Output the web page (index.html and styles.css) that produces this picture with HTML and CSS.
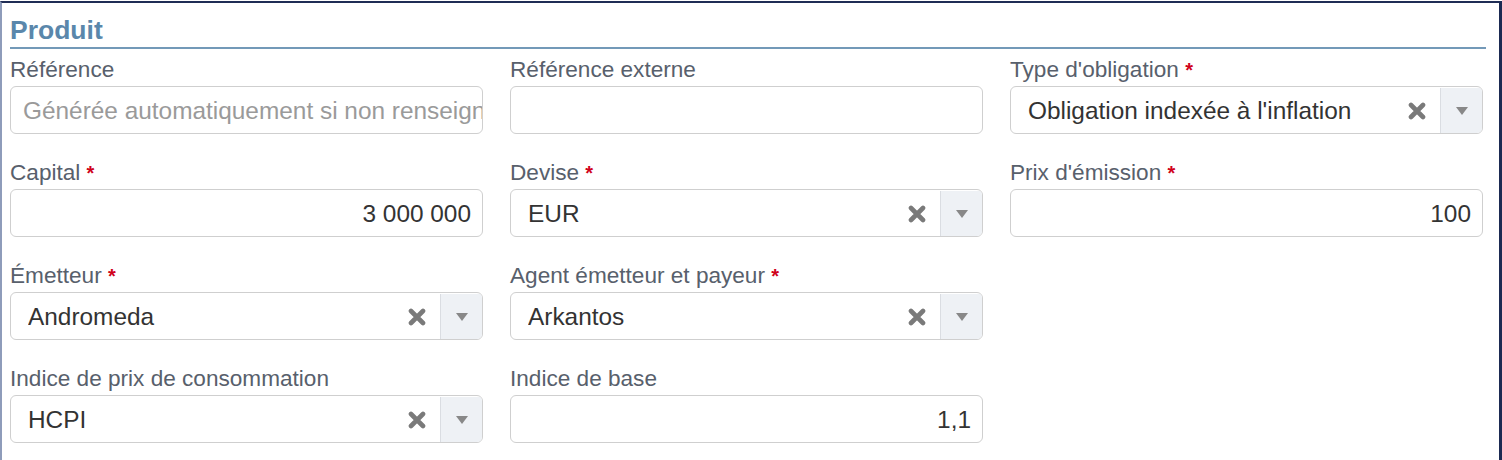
FILE: index.html
```html
<!DOCTYPE html>
<html lang="fr">
<head>
<meta charset="utf-8">
<link rel="stylesheet" href="styles.css">
</head>
<body>
<div class="frame">
  <h2 class="section-title">Produit</h2>
  <div class="grid">
    <div class="field">
      <label class="label">Référence</label>
      <div class="input placeholder">Générée automatiquement si non renseigné</div>
    </div>
    <div class="field">
      <label class="label">Référence externe</label>
      <div class="input"></div>
    </div>
    <div class="field">
      <label class="label">Type d'obligation <span class="req">*</span></label>
      <div class="select">
        <span class="value">Obligation indexée à l'inflation</span>
        <span class="clear"><svg width="18" height="18" viewBox="0 0 18 18"><path d="M3 3L15 15M15 3L3 15" stroke="#7a7a7a" stroke-width="4.6" stroke-linecap="round"/></svg></span>
        <span class="arrow"><svg width="12" height="8" viewBox="0 0 12 8"><path d="M0 0H12L6 8Z" fill="#888"/></svg></span>
      </div>
    </div>

    <div class="field">
      <label class="label">Capital <span class="req">*</span></label>
      <div class="input num">3 000 000</div>
    </div>
    <div class="field">
      <label class="label">Devise <span class="req">*</span></label>
      <div class="select">
        <span class="value">EUR</span>
        <span class="clear"><svg width="18" height="18" viewBox="0 0 18 18"><path d="M3 3L15 15M15 3L3 15" stroke="#7a7a7a" stroke-width="4.6" stroke-linecap="round"/></svg></span>
        <span class="arrow"><svg width="12" height="8" viewBox="0 0 12 8"><path d="M0 0H12L6 8Z" fill="#888"/></svg></span>
      </div>
    </div>
    <div class="field">
      <label class="label">Prix d'émission <span class="req">*</span></label>
      <div class="input num">100</div>
    </div>

    <div class="field">
      <label class="label">Émetteur <span class="req">*</span></label>
      <div class="select">
        <span class="value">Andromeda</span>
        <span class="clear"><svg width="18" height="18" viewBox="0 0 18 18"><path d="M3 3L15 15M15 3L3 15" stroke="#7a7a7a" stroke-width="4.6" stroke-linecap="round"/></svg></span>
        <span class="arrow"><svg width="12" height="8" viewBox="0 0 12 8"><path d="M0 0H12L6 8Z" fill="#888"/></svg></span>
      </div>
    </div>
    <div class="field">
      <label class="label">Agent émetteur et payeur <span class="req">*</span></label>
      <div class="select">
        <span class="value">Arkantos</span>
        <span class="clear"><svg width="18" height="18" viewBox="0 0 18 18"><path d="M3 3L15 15M15 3L3 15" stroke="#7a7a7a" stroke-width="4.6" stroke-linecap="round"/></svg></span>
        <span class="arrow"><svg width="12" height="8" viewBox="0 0 12 8"><path d="M0 0H12L6 8Z" fill="#888"/></svg></span>
      </div>
    </div>
    <div class="field empty"></div>

    <div class="field">
      <label class="label">Indice de prix de consommation</label>
      <div class="select">
        <span class="value">HCPI</span>
        <span class="clear"><svg width="18" height="18" viewBox="0 0 18 18"><path d="M3 3L15 15M15 3L3 15" stroke="#7a7a7a" stroke-width="4.6" stroke-linecap="round"/></svg></span>
        <span class="arrow"><svg width="12" height="8" viewBox="0 0 12 8"><path d="M0 0H12L6 8Z" fill="#888"/></svg></span>
      </div>
    </div>
    <div class="field">
      <label class="label">Indice de base</label>
      <div class="input num">1,1</div>
    </div>
    <div class="field empty"></div>
  </div>
</div>
</body>
</html>
```

FILE: styles.css
```css
* { box-sizing: border-box; }
html, body {
  margin: 0;
  padding: 0;
  background: #fff;
  font-family: "Liberation Sans", Arial, Helvetica, sans-serif;
}
.frame {
  width: 1502px;
  height: 460px;
  margin-top: 1px;
  border-top: 2px solid #1f2d55;
  border-left: 2px solid #8e9cba;
  border-right: 3px solid #1b2a52;
  padding: 0 13px 0 8px;
  overflow: hidden;
}
.section-title {
  margin: 0;
  padding-top: 12px;
  font-size: 26.5px;
  line-height: 30px;
  font-weight: bold;
  color: #5a87ab;
  border-bottom: 2px solid #7399b8;
  padding-bottom: 2px;
}
.grid {
  display: grid;
  grid-template-columns: 473px 473px 473px;
  column-gap: 27px;
  row-gap: 25px;
  margin-top: 7px;
}
.field {
  display: flex;
  flex-direction: column;
}
.label {
  font-size: 22.6px;
  line-height: 28px;
  color: #58606c;
  margin-bottom: 2px;
  white-space: nowrap;
}
.req {
  color: #d0021b;
  font-weight: bold;
  font-size: 20px;
}
.input, .select {
  height: 48px;
  border: 1px solid #cfcfcf;
  border-radius: 6px;
  font-size: 24.4px;
  color: #333;
  background: #fff;
  display: flex;
  align-items: center;
  overflow: hidden;
  white-space: nowrap;
}
.input {
  padding: 1px 11px 0 12px;
}
.input.placeholder {
  color: #9a9a9a;
  font-size: 24.4px;
}
.input.num {
  justify-content: flex-end;
}
.select {
  padding-left: 17px;
  padding-top: 1px;
}
.select .value {
  flex: 1;
  overflow: hidden;
}
.select .clear {
  width: 24px;
  display: flex;
  justify-content: center;
  margin-right: 11px;
}
.select .arrow {
  width: 42px;
  height: 100%;
  background: #eef1f5;
  border-left: 1px solid #dadde2;
  display: flex;
  align-items: center;
  justify-content: center;
}
```
